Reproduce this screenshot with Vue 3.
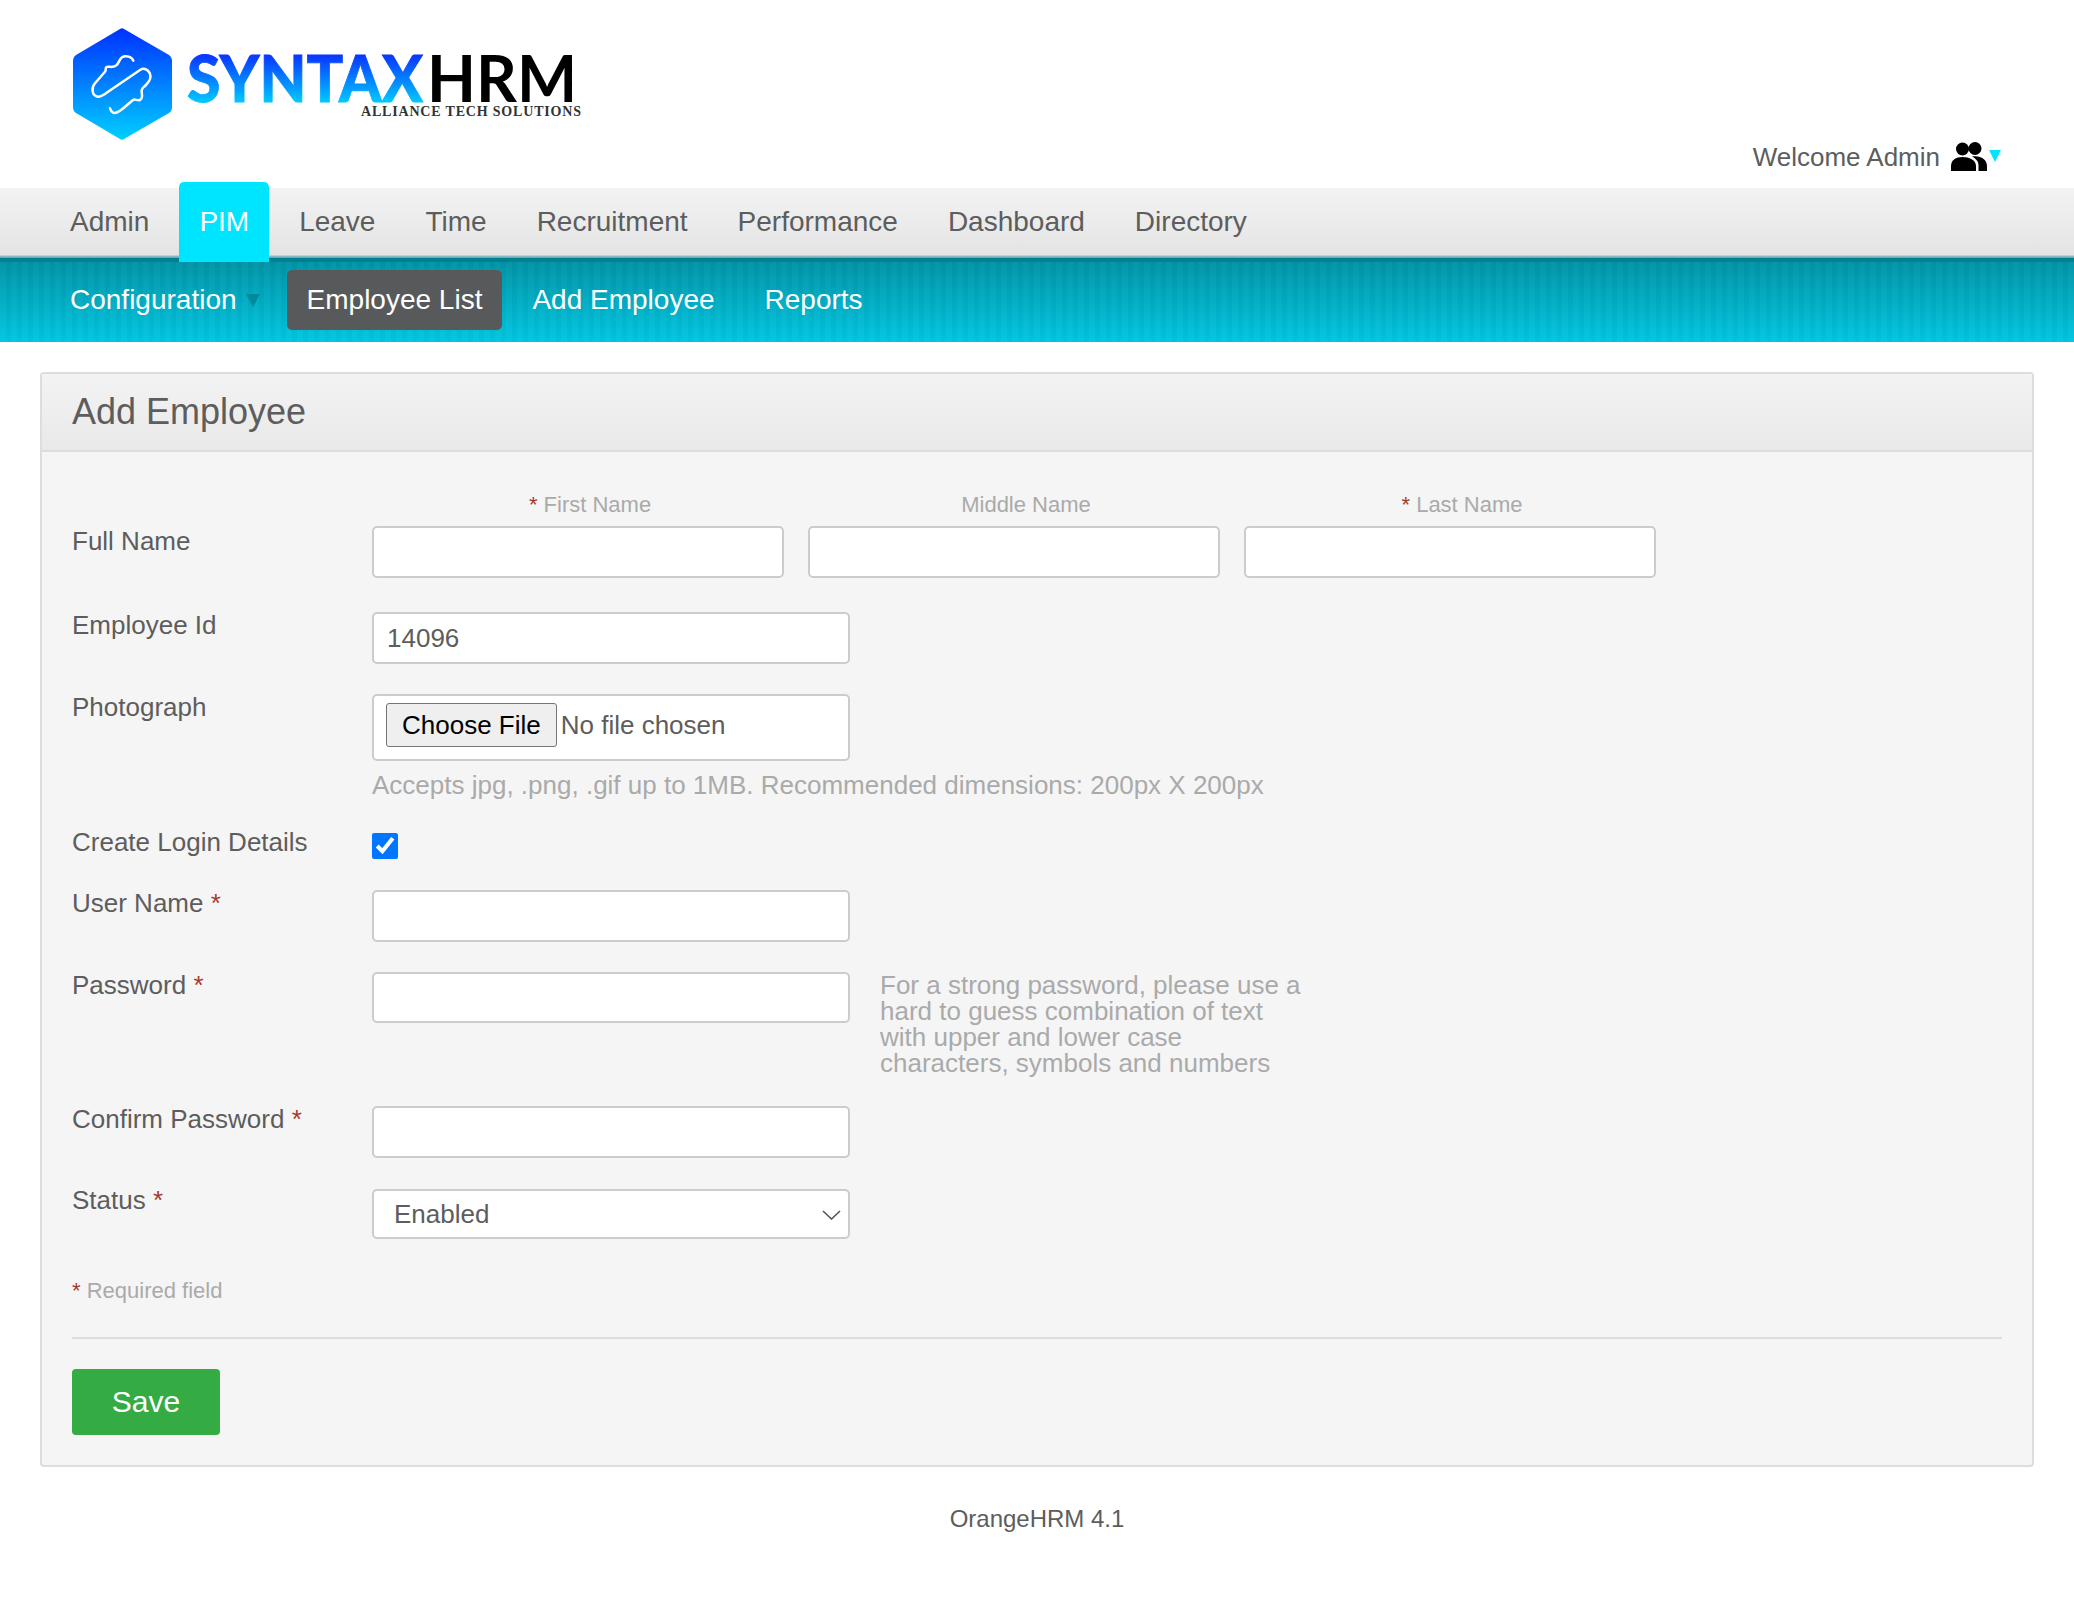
<template>
  <div class="page">
    <header class="top">
      <svg class="logo" width="600" height="188" viewBox="0 0 600 188">
        <defs>
          <linearGradient id="hexg" gradientUnits="userSpaceOnUse" x1="0" y1="28" x2="0" y2="140">
            <stop offset="0" stop-color="#0030ff" />
            <stop offset="1" stop-color="#00d0ff" />
          </linearGradient>
          <linearGradient id="txtg" gradientUnits="userSpaceOnUse" x1="0" y1="55" x2="0" y2="102">
            <stop offset="0" stop-color="#0a34ff" />
            <stop offset="1" stop-color="#00c8ff" />
          </linearGradient>
        </defs>
        <path d="M120 29 Q122 27.500 124 29 L169 55 Q172 57 172 60 L172 108 Q172 111 169 113 L124 139 Q122 140.500 120 139 L76 113 Q73 111 73 108 L73 60 Q73 57 76 55 Z" fill="url(#hexg)" />
        <path d="M133.300 60.700 C132 57 126 54.800 122 57.300 C119 59.500 119 63 116.700 65 C114 68 110.500 66.500 107.500 66.800 C104.500 67 106.500 70.500 105 71.700 L95 83.300 C91 88 92 95 97 96.500 C100 97.500 103 95.500 107 92.500 L140 70 C144 67.500 148 69.500 149.700 73 C151.500 77 150 81 146 85 C143 88 141 88 141.700 92 C142 95 143 98.500 140 100 C137 101 135 98.500 133 100 L123.300 108.300 C120 111 116 114 113 112.700 C111 111.800 110.500 110 110 108.300" fill="none" stroke="#fff" stroke-width="2.500" stroke-linecap="round" stroke-linejoin="round" />
        <text class="syn" x="187" y="102" fill="url(#txtg)" stroke="url(#txtg)" stroke-width="0.800" textLength="236" lengthAdjust="spacingAndGlyphs">SYNTAX</text>
        <text class="hrm" x="427" y="102" textLength="150" lengthAdjust="spacingAndGlyphs">HRM</text>
        <text class="tag" x="361" y="116" textLength="220" lengthAdjust="spacing">ALLIANCE TECH SOLUTIONS</text>
      </svg>
      <div class="welcome">
        <span>Welcome Admin</span>
        <svg class="users" width="38" height="30" viewBox="0 0 38 30">
          <circle cx="12.500" cy="7" r="6.500" />
          <circle cx="25" cy="6.500" r="6.500" />
          <path d="M1 29 L1 24 C1 18 6 15 12.500 15 C19 15 26 18 26 24 L26 29 Z" />
          <path d="M22 14.500 C30 13 37 17 37 24 L37 29 L28.500 29 L28.500 23 C28.500 19.500 26 16.500 22 14.500 Z" />
        </svg>
        <i class="caret"></i>
      </div>
    </header>

    <nav class="mainnav">
      <a v-for="item in mainItems" :key="item" class="tab" :class="{ active: item === 'PIM' }">{{ item }}</a>
    </nav>
    <nav class="subnav">
      <a class="sub config">Configuration<i class="subcaret"></i></a>
      <a class="sub current">Employee List</a>
      <a class="sub">Add Employee</a>
      <a class="sub">Reports</a>
    </nav>

    <section class="panel">
      <h1 class="panel-head">Add Employee</h1>
      <form class="panel-body" @submit.prevent>
        <div class="row name-row">
          <label class="name-label">Full Name</label>
          <div class="names">
            <div v-for="n in nameFields" :key="n.label" class="name-field">
              <span class="small"><em v-if="n.req">* </em>{{ n.label }}</span>
              <input class="field wide" type="text" />
            </div>
          </div>
        </div>

        <div class="row emp-row">
          <label>Employee Id</label>
          <input class="field" type="text" value="14096" />
        </div>

        <div class="row photo-row">
          <label>Photograph</label>
          <div>
            <div class="field filebox"><input class="file" type="file" /></div>
            <p class="hint photo-hint">Accepts jpg, .png, .gif up to 1MB. Recommended dimensions: 200px X 200px</p>
          </div>
        </div>

        <div class="row check-row">
          <label>Create Login Details</label>
          <input class="check" type="checkbox" checked />
        </div>

        <div class="row user-row">
          <label>User Name <em>*</em></label>
          <input class="field" type="text" />
        </div>

        <div class="row pass-row">
          <label>Password <em>*</em></label>
          <div class="pass">
            <input class="field" type="password" />
            <p class="hint pass-hint">For a strong password, please use a hard to guess combination of text with upper and lower case characters, symbols and numbers</p>
          </div>
        </div>

        <div class="row confirm-row">
          <label>Confirm Password <em>*</em></label>
          <input class="field" type="password" />
        </div>

        <div class="row status-row">
          <label>Status <em>*</em></label>
          <div class="select-wrap">
            <select class="field select">
              <option>Enabled</option>
            </select>
            <svg class="chev" width="19" height="10" viewBox="0 0 19 10">
              <path d="M1 1 L9.500 9 L18 1" fill="none" stroke="#555" stroke-width="1.600" />
            </svg>
          </div>
        </div>

        <p class="required"><em>*</em> Required field</p>
        <hr class="rule" />
        <button class="save" type="submit">Save</button>
      </form>
    </section>

    <footer class="foot">OrangeHRM 4.1</footer>
  </div>
</template>

<script setup>
const mainItems = ['Admin', 'PIM', 'Leave', 'Time', 'Recruitment', 'Performance', 'Dashboard', 'Directory']
const nameFields = [
  { label: 'First Name', req: true },
  { label: 'Middle Name', req: false },
  { label: 'Last Name', req: true },
]
</script>

<style>
html, body { margin: 0; background: #fff; }
</style>

<style scoped>
.page {
  width: 2074px;
  min-height: 1620px;
  font-family: "Liberation Sans", Arial, sans-serif;
  color: #5d5d5d;
  font-size: 26px;
  line-height: 26px;
}
.top {
  height: 188px;
  display: flex;
  justify-content: space-between;
  align-items: flex-end;
}
.logo { display: block; }
.syn { font-family: Lato, sans-serif; font-weight: 900; font-size: 65px; }
.hrm { font-family: Lato, sans-serif; font-weight: 700; font-size: 65px; fill: #000; }
.tag { font-family: "Liberation Serif", serif; font-weight: 700; font-size: 14px; fill: #333; }
.welcome {
  display: flex;
  align-items: flex-start;
  margin-right: 73px;
  margin-bottom: 14px;
  height: 32px;
}
.welcome span { margin-top: 2px; }
.users { fill: #000; margin-left: 10px; }
.caret {
  width: 0;
  height: 0;
  margin: 8px 0 0 1px;
  border-left: 6px solid transparent;
  border-right: 6px solid transparent;
  border-top: 12px solid #00e5ff;
}
.mainnav {
  height: 70px;
  border-bottom: 4px solid #00808f;
  background: linear-gradient(#f3f3f3, #e4e4e4 67px, #8fc0c6 68px, #5ea9b2);
  display: flex;
  gap: 10px;
  padding-left: 50px;
  font-size: 28px;
}
.tab {
  padding: 0 20px;
  line-height: 68px;
  height: 68px;
}
.tab.active {
  height: 80px;
  margin-top: -6px;
  line-height: 80px;
  background: #00e5ff;
  color: #fff;
  border-radius: 5px 5px 0 0;
}
.subnav {
  height: 80px;
  box-sizing: border-box;
  padding: 8px 0 0 50px;
  display: flex;
  gap: 10px;
  align-items: flex-start;
  font-size: 28px;
  background:
    repeating-linear-gradient(90deg, rgba(255, 255, 255, .025) 0 6px, rgba(0, 0, 0, .015) 6px 11px),
    linear-gradient(#0093a6, #00c6e0);
}
.sub {
  color: #fff;
  padding: 0 20px;
  height: 60px;
  line-height: 60px;
  border-radius: 5px;
}
.config { position: relative; padding-right: 40px; }
.subcaret {
  position: absolute;
  left: 196px;
  top: 24px;
  width: 0;
  height: 0;
  border-left: 7px solid transparent;
  border-right: 7px solid transparent;
  border-top: 13px solid #008a9b;
}
.current { background: #58595b; }
.panel {
  margin: 30px 40px 0;
  width: 1994px;
  box-sizing: border-box;
  height: 1095px;
  background: #f5f5f5;
  border: 2px solid #ddd;
  border-radius: 4px;
}
.panel-head {
  margin: 0;
  height: 76px;
  padding-left: 30px;
  font-size: 36px;
  font-weight: 400;
  line-height: 76px;
  background: linear-gradient(#f3f3f3, #e9e9e9);
  border-bottom: 2px solid #ddd;
}
.panel-body {
  padding: 74px 30px 0;
  display: flex;
  flex-direction: column;
}
.row {
  display: grid;
  grid-template-columns: 300px 1fr;
  align-items: start;
}
em { font-style: normal; color: #a33a2c; }
.field {
  display: block;
  box-sizing: border-box;
  width: 478px;
  height: 52px;
  background: #fff;
  border: 2px solid #ccc;
  border-radius: 5px;
  padding: 0 13px;
  font: inherit;
  color: #5d5d5d;
  outline: none;
}
.field.wide { width: 412px; }
.name-row { margin-bottom: 34px; }
.name-label { margin-top: 2px; }
.names { display: flex; gap: 24px; position: relative; }
.name-field { position: relative; }
.small {
  position: absolute;
  left: 24px;
  right: 0;
  top: -34px;
  text-align: center;
  font-size: 22px;
  line-height: 26px;
  color: #aaa;
}
.emp-row { margin-bottom: 30px; }
.photo-row { margin-bottom: 35px; }
.filebox { height: 67px; padding: 7px 0 0 12px; }
.file {
  font: inherit;
  color: #5d5d5d;
  width: 440px;
  outline: none;
}
.file::file-selector-button {
  font: inherit;
  color: #000;
  height: 44px;
  padding: 0 15px;
  margin-right: 4px;
  background: #efefef;
  border: 1px solid #767676;
  border-radius: 3px;
}
.hint { margin: 0; color: #aaa; }
.photo-hint { margin-top: 11px; }
.check-row { margin-bottom: 30px; height: 27px; }
.check-row label { margin-top: -4px; }
.check {
  width: 26px;
  height: 26px;
  margin: 0;
  accent-color: #0075ff;
}
.user-row { margin-bottom: 30px; }
.pass-row { margin-bottom: 30px; }
.pass { display: flex; gap: 30px; }
.pass .field { height: 51px; }
.pass-hint { width: 425px; }
.confirm-row { margin-bottom: 31px; }
.status-row { margin-bottom: 39px; }
.status-row label { margin-top: -2px; }
.select-wrap { position: relative; width: 478px; }
.select {
  height: 50px;
  padding-left: 20px;
  appearance: none;
}
.chev {
  position: absolute;
  right: 9px;
  top: 21px;
  pointer-events: none;
}
.required {
  margin: 0;
  font-size: 22px;
  line-height: 26px;
  color: #aaa;
}
.rule {
  width: 100%;
  margin: 33px 0 30px;
  border: 0;
  border-top: 2px solid #ddd;
}
.save {
  width: 148px;
  height: 66px;
  background: #35ac43;
  color: #fff;
  border: 0;
  border-radius: 4px;
  font: inherit;
  font-size: 30px;
}
.foot {
  margin-top: 39px;
  text-align: center;
  font-size: 24px;
}
</style>
